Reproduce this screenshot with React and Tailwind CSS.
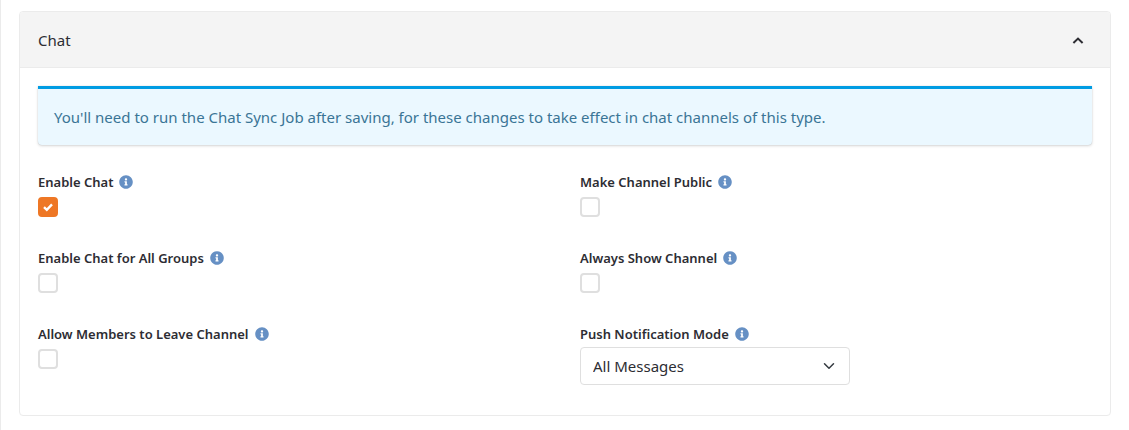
import { useState } from "react";
import { FaInfoCircle } from "react-icons/fa";

function FieldLabel({ id, text }) {
  return (
    <div className="flex h-5 items-center gap-1.5">
      <label htmlFor={id} className="text-[13px] leading-5 font-semibold text-[#2d2d33]">
        {text}
      </label>
      <button type="button" aria-label={`Help: ${text}`} className="text-[#6690c4]">
        <FaInfoCircle className="size-3.5" aria-hidden="true" />
      </button>
    </div>
  );
}

function CheckField({ id, text, initial = false }) {
  const [checked, setChecked] = useState(initial);
  return (
    <div className="flex h-[76px] flex-col items-start gap-[5px]">
      <FieldLabel id={id} text={text} />
      <span className="grid size-5 place-items-center">
        <input
          id={id}
          type="checkbox"
          checked={checked}
          onChange={(e) => setChecked(e.target.checked)}
          className="col-start-1 row-start-1 size-5 appearance-none rounded border-2 border-[#dfdfdf] bg-white checked:border-[#ee7725] checked:bg-[#ee7725]"
        />
        {checked && (
          <svg
            viewBox="0 0 10 10"
            className="pointer-events-none col-start-1 row-start-1 size-2.5"
            fill="none"
            stroke="white"
            strokeWidth="2.4"
            aria-hidden="true"
          >
            <path d="m1 5.2 2.8 2.6L9 2.4" />
          </svg>
        )}
      </span>
    </div>
  );
}

export default function App() {
  const [open, setOpen] = useState(true);
  return (
    <main className="min-h-screen border-l border-[#ebebeb] bg-white px-[18px] py-[11px] font-['Noto_Sans','Open_Sans',sans-serif] text-[#2d2d33]">
      <section className="overflow-hidden rounded border border-[#ebebeb] bg-white">
        <header className="flex h-14 items-center justify-between border-b border-[#ebebeb] bg-[#f4f4f4] px-[18px]">
          <h2 className="text-[15px] leading-6">Chat</h2>
          <button
            type="button"
            aria-label="Toggle Chat section"
            aria-expanded={open}
            onClick={() => setOpen(!open)}
            className="flex size-7 items-center justify-center"
          >
            <svg
              viewBox="0 0 12 12"
              className="size-3"
              fill="none"
              stroke="currentColor"
              strokeWidth="2"
              aria-hidden="true"
            >
              <path d="M1.4 9 6 4.6 10.6 9" />
            </svg>
          </button>
        </header>
        {open && (
          <div className="px-[18px] pt-[18px] pb-[15px]">
            <div
              role="status"
              className="rounded-b border-t-[3px] border-[#009ce3] bg-[#ebf8ff] px-4 py-4 text-[15px] leading-6 text-[#3a7596] shadow-[0_0_1px_rgba(0,0,0,0.2),0_1px_3px_rgba(0,0,0,0.16)]"
            >
              You'll need to run the Chat Sync Job after saving, for these changes to take effect in chat channels of
              this type.
            </div>
            <div className="mt-[27px] grid grid-cols-2 gap-x-[30px]">
              <CheckField id="enable-chat" text="Enable Chat" initial />
              <CheckField id="make-public" text="Make Channel Public" />
              <CheckField id="enable-all" text="Enable Chat for All Groups" />
              <CheckField id="always-show" text="Always Show Channel" />
              <CheckField id="allow-leave" text="Allow Members to Leave Channel" />
              <div>
                <FieldLabel id="push-mode" text="Push Notification Mode" />
                <div className="mt-[3px] grid w-[270px] max-w-full items-center">
                  <select
                    id="push-mode"
                    defaultValue="All Messages"
                    className="col-start-1 row-start-1 h-[38px] w-full appearance-none rounded border border-[#dfdfdf] bg-white pr-9 pl-3 text-[15px] leading-6"
                  >
                    <option>All Messages</option>
                    <option>Mentions</option>
                    <option>Silent</option>
                  </select>
                  <svg
                    viewBox="0 0 16 16"
                    className="pointer-events-none col-start-1 row-start-1 mr-[15px] size-3 justify-self-end"
                    fill="none"
                    stroke="#343a40"
                    strokeWidth="2"
                    strokeLinecap="round"
                    strokeLinejoin="round"
                    aria-hidden="true"
                  >
                    <path d="m2 5 6 6 6-6" />
                  </svg>
                </div>
              </div>
            </div>
          </div>
        )}
      </section>
    </main>
  );
}
